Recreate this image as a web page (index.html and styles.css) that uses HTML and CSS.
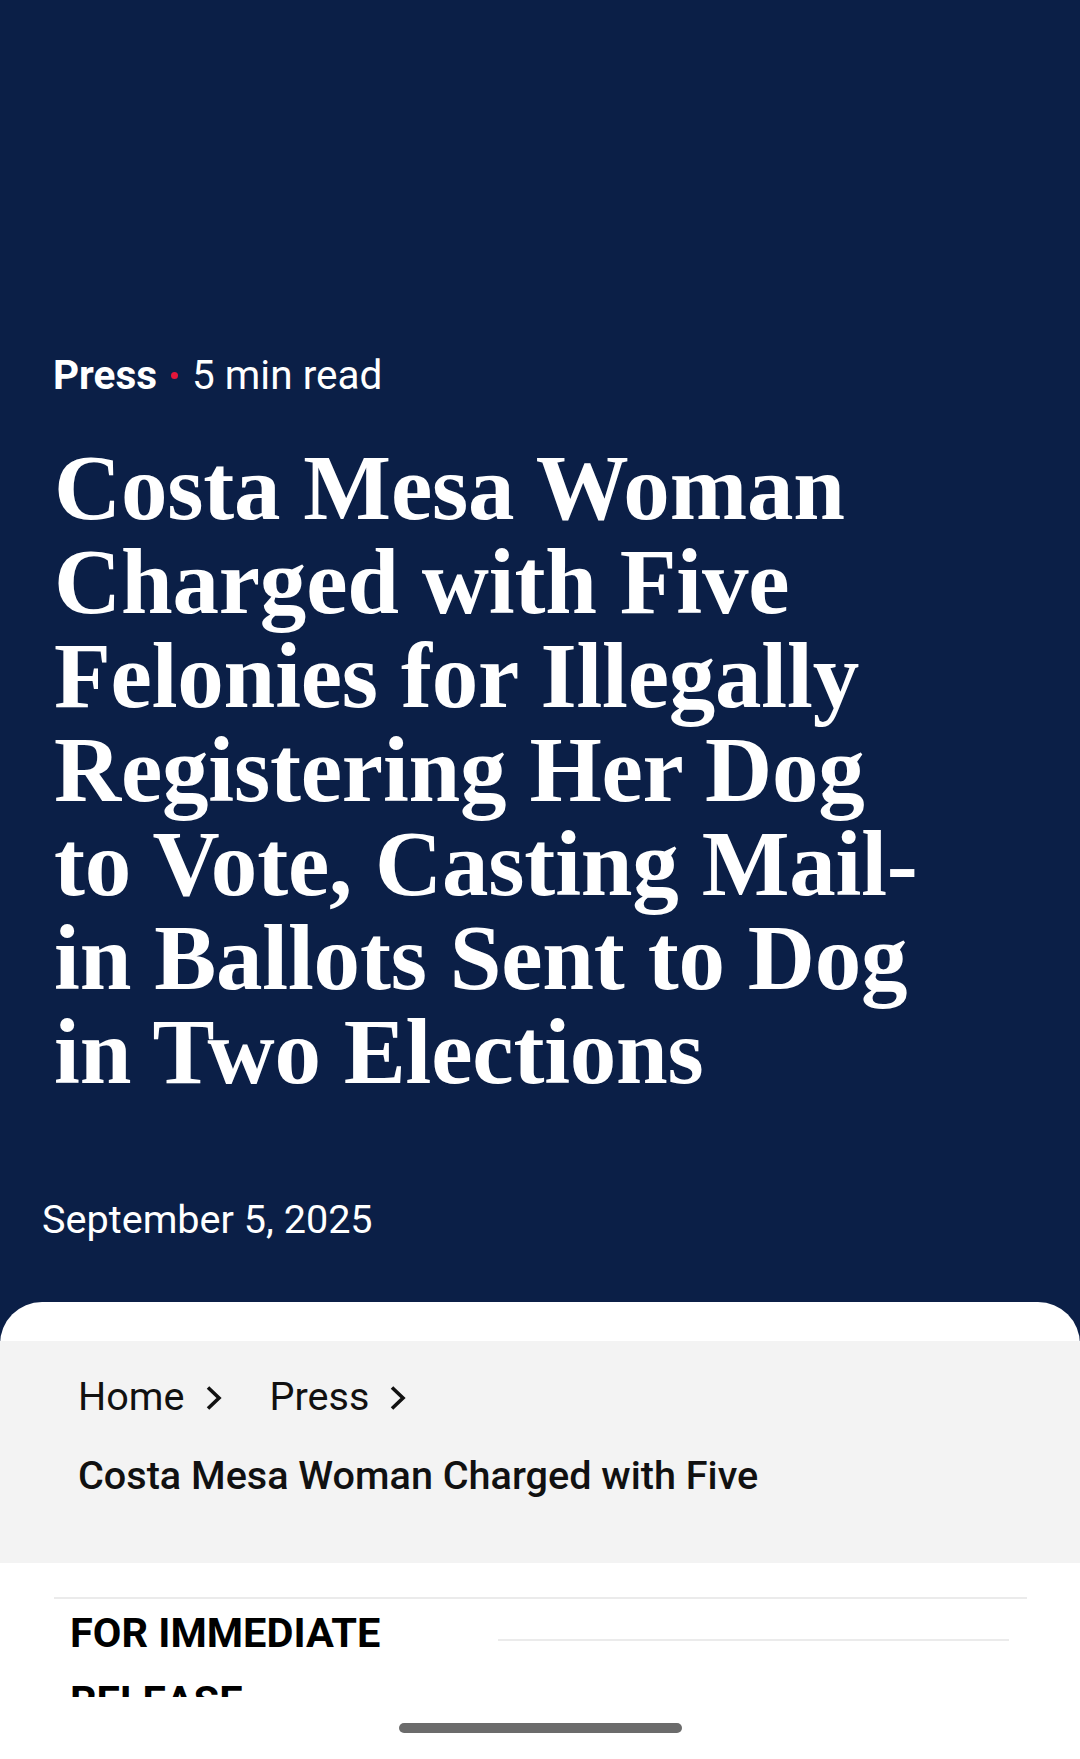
FILE: index.html
```html
<!DOCTYPE html>
<html lang="en">
<head>
<meta charset="utf-8">
<title>Costa Mesa Woman Charged with Five Felonies</title>
<link rel="stylesheet" href="styles.css">
</head>
<body>
<div class="screen">
  <div class="viewport">
    <header class="hero">
      <div class="meta">
        <span class="meta-cat">Press</span>
        <span class="meta-dot"></span>
        <span class="meta-read">5 min read</span>
      </div>
      <h1 class="title">Costa Mesa Woman Charged with Five Felonies for Illegally Registering Her Dog to Vote, Casting Mail-in Ballots Sent to Dog in Two Elections</h1>
      <p class="date">September 5, 2025</p>
    </header>
    <main class="card">
      <nav class="crumbs">
        <div class="crumb-row">
          <span class="crumb">Home
            <svg class="chev" width="16" height="24" viewBox="0 0 16 24"><polyline points="2,1.5 13,12 2,22.5" fill="none" stroke="#111" stroke-width="3.6"/></svg>
          </span>
          <span class="crumb">Press
            <svg class="chev" width="16" height="24" viewBox="0 0 16 24"><polyline points="2,1.5 13,12 2,22.5" fill="none" stroke="#111" stroke-width="3.6"/></svg>
          </span>
        </div>
        <div class="crumb-current">Costa Mesa Woman Charged with Five</div>
      </nav>
      <section class="release">
        <div class="release-inner">
          <h2 class="release-label">FOR IMMEDIATE RELEASE</h2>
          <div class="release-rule"></div>
        </div>
      </section>
    </main>
  </div>
  <div class="navbar"><div class="home-indicator"></div></div>
</div>
</body>
</html>
```
FILE: styles.css
```css
* { box-sizing: border-box; }
html, body { margin: 0; padding: 0; }
body {
  background: #ffffff;
  font-family: Roboto, "Liberation Sans", Arial, sans-serif;
  width: 1080px;
}
.screen {
  width: 1080px;
  height: 1759px;
  display: flex;
  flex-direction: column;
}
.viewport {
  height: 1697px;
  overflow: hidden;
  background: #0b1f47;
}
.hero {
  padding: 352px 0 59px 0;
  color: #ffffff;
}
.meta {
  display: flex;
  align-items: center;
  padding-left: 53px;
  font-size: 40.5px;
  line-height: 46px;
  height: 46px;
}
.meta-cat { font-weight: 700; }
.meta-dot {
  width: 7px;
  height: 7px;
  border-radius: 50%;
  background: #e3163a;
  margin: 0 14px 0 14px;
}
.meta-read { font-weight: 400; }
.title {
  margin: 43px 0 0 0;
  padding-left: 54px;
  width: 945px;
  font-family: "Liberation Serif", "Times New Roman", serif;
  font-weight: 700;
  font-size: 93px;
  line-height: 94px;
  letter-spacing: -0.2px;
  color: #ffffff;
}
.date {
  margin: 98px 0 0 0;
  padding-left: 42px;
  font-size: 39.6px;
  line-height: 46px;
  font-weight: 400;
}
.card {
  background: #ffffff;
  border-radius: 42px 42px 0 0;
  padding-top: 39px;
  min-height: 600px;
}
.crumbs {
  background: #f3f3f3;
  padding: 33px 40px 64px 78px;
  color: #111111;
  font-size: 39.6px;
  line-height: 46px;
}
.crumb-row {
  display: flex;
  gap: 48px;
}
.crumb {
  display: flex;
  align-items: center;
  gap: 21px;
  font-weight: 400;
}
.chev { display: block; margin-top: 1px; }
.crumb-current {
  margin-top: 33px;
  font-weight: 500;
  white-space: nowrap;
}
.release {
  padding: 34px 53px 0 54px;
}
.release-inner {
  border-top: 2px solid #ebebeb;
  display: flex;
  gap: 16px;
}
.release-label {
  margin: 0;
  width: 428px;
  padding-left: 16px;
  font-size: 41.5px;
  line-height: 68px;
  font-weight: 700;
  color: #000000;
  padding-right: 50px;
}
.release-rule {
  flex: 1;
  margin: 40px 18px 0 0;
  height: 2px;
  background: #ebebeb;
}
.navbar {
  height: 62px;
  background: #ffffff;
  display: flex;
  justify-content: center;
  padding-top: 26px;
}
.home-indicator {
  width: 283px;
  height: 10px;
  border-radius: 5px;
  background: #6b6b6b;
}
```
